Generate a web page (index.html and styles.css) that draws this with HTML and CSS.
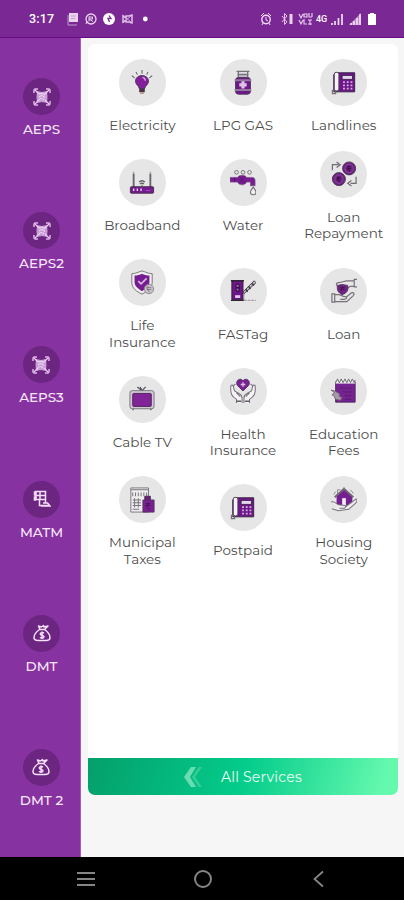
FILE: index.html
```html
<!DOCTYPE html>
<html lang="en">

<head>
    <meta charset="UTF-8">
    <meta name="viewport" content="width=device-width, initial-scale=1.0">
    <title>Services</title>
    <link rel="stylesheet" href="styles.css">
</head>

<body>
    <!-- Icons used more than once -->
    <svg class="defs" width="0" height="0">
        <symbol id="aeps" viewBox="0 0 18 18">
            <path d="M1 5V2l1-1h3M13 1h3l1 1v3M17 13v3l-1 1h-3M5 17H2l-1-1v-3" fill="none" stroke="#dfb5e8" stroke-width="1.5"/>
            <path d="M4 3l5 1 5-1 .5 6-.5 6-5-1-5 1-.5-6z" fill="#c79bd3"/>
            <path d="M6 6c2-1 5-1 6 1M6 9c2-2 4-2 6 1M6 12c1-2 3-2 5 0M2 2l4 4M16 2l-4 4M2 16l4-4M16 16l-4-4" fill="none" stroke="#ecd3f1" stroke-width="1.1"/>
        </symbol>
        <symbol id="bag" viewBox="0 0 18 18">
            <path d="M6.500 5.500C3 8 1 10.500 1 13.500 1 16 2.500 16.500 5 16.500h8c2.500 0 4-.5 4-3 0-3-2-5.500-5.500-8zM7 5.500L5.500 2l3 1 2-1.500.5 1.500L15 2l-3.500 3.500" fill="none" stroke="#f6e3fa" stroke-width="1.500" stroke-linejoin="round"/>
            <path d="M11 9.200C9.500 8 7.200 8.500 7.200 10c0 2 3.800 1 3.800 2.800 0 1.600-2.800 1.700-4 .5M9.100 7.500v7.500" fill="none" stroke="#f6e3fa" stroke-width="1.400"/>
        </symbol>
        <symbol id="phone" viewBox="0 0 28 28">
            <path d="M7 3h18.500v20.500H3V5h4" fill="#6d178b" stroke="#302038"/>
            <rect x="3.500" y="2.500" width="5" height="20" rx="2" fill="#f7f2f8" stroke="#493951"/>
            <rect x="12" y="6" width="11" height="4" fill="#e5d7eb" stroke="#321a3d" stroke-width=".8"/>
            <path d="M13 13h2M17 13h2M21 13h2M13 16.500h2M17 16.500h2M21 16.500h2M13 20h2M17 20h2M21 20h2" stroke="#d3b0dd" stroke-width="1.800"/>
            <path d="M5 23v2.500H1.500V22H4" fill="none" stroke="#77707b" stroke-width="1.300"/>
        </symbol>
    </svg>

    <header class="status-bar">
        <span class="time">3:17</span>
        <svg class="status-left" viewBox="0 0 82 14" width="82" height="14">
            <path d="M3 1h9v9H3z" fill="#e9d4ee"/>
            <path d="M2 3v10h9M5 4h5M5 6.500h4" stroke="#c49bd0" fill="none"/>
            <circle cx="25" cy="7" r="5" fill="none" stroke="#e9d4ee" stroke-width="1.300"/>
            <path d="M20 12l1-3M23 4.500v5M23 5h3.500v2H23l4 2.500" fill="none" stroke="#e9d4ee"/>
            <circle cx="43" cy="7" r="6" fill="#fff"/>
            <path d="M43 3.500l2 3h-3l1.500 3.500" fill="none" stroke="#7a2994" stroke-width="1.300"/>
            <path d="M57 4v6l3-2v2h3l3 1V3l-3 1h-3v2z" fill="none" stroke="#dfbee7" stroke-width="1.500"/>
            <path d="M57 3l9 8M57 11l9-8" stroke="#dfbee7" stroke-width=".8"/>
            <circle cx="79.300" cy="7" r="2.400" fill="#fff"/>
        </svg>
        <div class="status-right">
            <svg viewBox="0 0 54 14" width="54" height="14">
                <circle cx="6" cy="7.500" r="4.200" fill="none" stroke="#f0dcf4" stroke-width="1.400"/>
                <path d="M1 4l3-3M11 4L8 1M6 5v3l2 1M3 11l-1 2M9 11l1 2" stroke="#f0dcf4" fill="none"/>
                <path d="M22 4l5 6-2.500 2.500v-11L27 4l-5 6" stroke="#e3c6e9" fill="none"/>
                <path d="M31 2v10" stroke="#ead0ef" stroke-width="3"/>
                <path d="M39 2l2 4 2-4M44 2v3h3V2zM49 1v4h3M52 1v4M39 8l2 4 2-4M44 7v5h3M48 8h4M50 8v5M48 12h4" stroke="#e5c9eb" stroke-width="1.200" fill="none"/>
            </svg>
            <span class="network">4G</span>
            <svg viewBox="0 0 47 14" width="47" height="14">
                <path d="M2 11v2M5 9v4" stroke="#f0dcf4" stroke-width="1.700"/>
                <path d="M8.500 6v7M12 2v11" stroke="#f0dcf4" stroke-width="1.700"/>
                <path d="M19 13L31 1v12z" fill="#b987c8"/>
                <path d="M21 11v2M24 9v4M27 6v7M30 2v11" stroke="#f0dcf4" stroke-width="1.700"/>
                <path d="M40 1h4v1h2v11h-8V2h2z" fill="#fff"/>
            </svg>
        </div>
    </header>

    <div class="content">
        <nav class="sidebar">
            <a class="side-item"><span class="side-icon"><svg><use href="#aeps"/></svg></span>AEPS</a>
            <a class="side-item"><span class="side-icon"><svg><use href="#aeps"/></svg></span>AEPS2</a>
            <a class="side-item"><span class="side-icon"><svg><use href="#aeps"/></svg></span>AEPS3</a>
            <a class="side-item">
                <span class="side-icon"><svg viewBox="0 0 18 18">
                    <path d="M3 1.500h9.500v8H3zM7 1.500v8M3 5.500h9.500M3 2H1.500v3H3M3 7H1.500v3H3M6.500 9.500v6H15M12.500 9v4M10 13h4.500l2.500 3H8" fill="none" stroke="#f5e0f9" stroke-width="1.500"/>
                </svg></span>MATM
            </a>
            <a class="side-item"><span class="side-icon"><svg><use href="#bag"/></svg></span>DMT</a>
            <a class="side-item"><span class="side-icon"><svg><use href="#bag"/></svg></span>DMT 2</a>
        </nav>

        <main class="main">
            <section class="card">
                <div class="services">
                    <!-- First Row -->
                    <div class="service">
                        <span class="icon"><svg viewBox="0 0 28 28">
                            <path d="M3 6l3 2.500M7.500 2L9 5M14 0v4M20.500 2L19 5M25 6l-3 2.500" stroke="#5f5964" stroke-width="1.100"/>
                            <path d="M11 20c0-3-4-4-4-8 0-8 14-8 14 0 0 4-4 5-4 8z" fill="#812098" stroke="#52315e"/>
                            <path d="M14.500 8c2 .3 3 1.500 3 3.500" fill="none" stroke="#d9a8e4" stroke-width="1.500"/>
                            <path d="M11 20h6v4h-6z" fill="#4a304f"/>
                            <path d="M12 25h4" stroke="#aa6b42"/>
                        </svg></span>
                        <span class="label">Electricity</span>
                    </div>
                    <div class="service">
                        <span class="icon"><svg viewBox="0 0 28 28">
                            <path d="M10 3h8v6h-8z" fill="#c9c4ce"/>
                            <path d="M7 1.500h14M9 2v6M19 2v6M8 5h12" stroke="#77717a" stroke-width="1.500"/>
                            <rect x="6" y="8" width="16" height="18" rx="3" fill="#6f188c" stroke="#4b3453"/>
                            <path d="M5 11h18M5 21.500h18" stroke="#8f7b98" stroke-width="2"/>
                            <path d="M14 12v8M10 16h8" stroke="#dcc4e4" stroke-width="3.500"/>
                        </svg></span>
                        <span class="label">LPG GAS</span>
                    </div>
                    <div class="service">
                        <span class="icon"><svg><use href="#phone"/></svg></span>
                        <span class="label">Landlines</span>
                    </div>

                    <!-- Second Row -->
                    <div class="service">
                        <span class="icon"><svg viewBox="0 0 28 28">
                            <path d="M5 19V4M23 19V4" stroke="#69636d" stroke-width="2"/>
                            <path d="M5 4V2M23 4V2" stroke="#77727b"/>
                            <path d="M11 13c2-2 4-2 6 0M12 15c1-1 3-1 4 0M14 16v1" fill="none" stroke="#5d5762" stroke-width="1.500"/>
                            <rect x="1.500" y="18" width="25" height="7" rx="1" fill="#751b90" stroke="#423149"/>
                            <path d="M5 20v2.500M9 20v2.500M13 20v2.500" stroke="#ead7ef" stroke-width="1.500"/>
                            <path d="M18 22h5" stroke="#a84fbc"/>
                        </svg></span>
                        <span class="label">Broadband</span>
                    </div>
                    <div class="service">
                        <span class="icon"><svg viewBox="0 0 28 28">
                            <circle cx="7" cy="2.500" r="2" fill="none" stroke="#77717b"/>
                            <circle cx="14" cy="2.500" r="2" fill="none" stroke="#77717b"/>
                            <circle cx="21" cy="2.500" r="2" fill="none" stroke="#77717b"/>
                            <path d="M0 8h8c2-3 8-3 10 0h6c2 0 3 1 3 4v5h-5v-4h-4c-2 4-8 4-10 0H0z" fill="#791c92" stroke="#7c5587" stroke-width=".8"/>
                            <path d="M5 8v5M10 7l6 7M16 7l-6 7" stroke="#53176a"/>
                            <path d="M25 18.500c-2 3-3 3.500-3 5.500 0 3.500 6 3.500 6 0 0-2-1-2.500-3-5.500z" fill="#eee" stroke="#77727b" stroke-width="1.200"/>
                        </svg></span>
                        <span class="label">Water</span>
                    </div>
                    <div class="service">
                        <span class="icon"><svg viewBox="0 0 28 28">
                            <circle cx="19.500" cy="8" r="7" fill="#6d2182" stroke="#473850"/>
                            <circle cx="8.500" cy="19.500" r="7" fill="#6d2182" stroke="#473850"/>
                            <circle cx="19.500" cy="8" r="4.500" fill="none" stroke="#9b55aa" stroke-width=".7"/>
                            <circle cx="8.500" cy="19.500" r="4.500" fill="none" stroke="#9b55aa" stroke-width=".7"/>
                            <path d="M17.500 6h4M17.500 8h4M19.500 6l-2 2 3 3M6.500 17.500h4M6.500 19.500h4M8.500 17.500l-2 2 3 3" fill="none" stroke="#38133e" stroke-width="1.100"/>
                            <path d="M1.500 10V4H8M6 1l4 3-4 3M27 17v7h-6M22 21l-4 3 4 3" fill="none" stroke="#716b74" stroke-width="1.300"/>
                        </svg></span>
                        <span class="label">Loan<br>Repayment</span>
                    </div>

                    <!-- Third Row -->
                    <div class="service">
                        <span class="icon"><svg viewBox="0 0 28 28">
                            <path d="M3 4c4 0 7-2 11-3 4 1 7 3 11 3v9c0 7-5 10-11 13C8 23 3 20 3 13z" fill="#eee" stroke="#77707b"/>
                            <path d="M6 6c3 0 6-1 8-2 2 1 5 2 8 2v7c0 5-4 7-8 10-4-3-8-5-8-10z" fill="#751d90"/>
                            <path d="M10 12l3 3 6-6" fill="none" stroke="#d8b7e1" stroke-width="1.800"/>
                            <circle cx="21.500" cy="20.500" r="5" fill="#c9c3cc" stroke="#8a838d"/>
                            <path d="M19 19h5M19 21h5M21 17l-2 2 3 5" fill="none" stroke="#6f6872" stroke-width=".8"/>
                        </svg></span>
                        <span class="label">Life<br>Insurance</span>
                    </div>
                    <div class="service">
                        <span class="icon"><svg viewBox="0 0 28 28">
                            <path d="M2 3h12v20H2z" fill="#6e158a" stroke="#302235"/>
                            <path d="M1 3h14M1 24h14" stroke="#332338" stroke-width="1.500"/>
                            <rect x="6" y="6" width="4.500" height="9" rx="2" fill="#37134a"/>
                            <circle cx="8.200" cy="8.500" r="1.200" fill="#aa66bb"/>
                            <circle cx="8.200" cy="12.500" r="1.200" fill="#aa66bb"/>
                            <path d="M5.500 18.500h5.500v3H5.500z" fill="#e7c9eb"/>
                            <path d="M14 15L26 3l2 2-13 12z" fill="#bdb8be" stroke="#3f3944"/>
                            <path d="M17 12l2 3M20 9l2 3M23.500 6l2.500 2" stroke="#3f3944" stroke-width="1.600"/>
                            <path d="M15 17v7M15 24h13" stroke="#8e8990" stroke-dasharray="3 1"/>
                        </svg></span>
                        <span class="label">FASTag</span>
                    </div>
                    <div class="service">
                        <span class="icon"><svg viewBox="0 0 28 28">
                            <path d="M28 1.500h-3v8h3M25 3h-8c-3 0-4 2-9 2-3 0-3 4 1 4h6M25 9h-4c-2 0-2 3-5 2" fill="none" stroke="#77707a" stroke-width="1.300"/>
                            <path d="M7 8l5-1 6 1c1 6-1 8-6 10-4-2-6-5-5-10z" fill="#702286" stroke="#553262"/>
                            <path d="M10 10h5M10 12h5M12 10l-1 4" stroke="#3b1640"/>
                            <path d="M1 17h3v9H1zM4 18h4c3 0 4 2 7 2 3 0 2 3-1 3h-4M16 21l6-5c2-1 4 1 2 3l-7 6.500H4" fill="none" stroke="#77707a" stroke-width="1.300"/>
                        </svg></span>
                        <span class="label">Loan</span>
                    </div>

                    <!-- Fourth Row -->
                    <div class="service">
                        <span class="icon"><svg viewBox="0 0 28 28">
                            <path d="M9 1l5 4 4-4M12 1l2 4M5 24l-1 2M23 24l1 2" fill="none" stroke="#55505a" stroke-width="1.300"/>
                            <rect x="1" y="5" width="26" height="19.500" rx="2.500" fill="#cfc9d2" stroke="#77717a"/>
                            <rect x="4" y="8" width="20" height="14" rx="1" fill="#812498" stroke="#51225e"/>
                        </svg></span>
                        <span class="label">Cable TV</span>
                    </div>
                    <div class="service">
                        <span class="icon"><svg viewBox="0 0 28 28">
                            <path d="M14 14L8 8C5 3 11-1 14 3c3-4 9 0 6 5z" fill="#782192" stroke="#51315d"/>
                            <path d="M14 4.500v5M11.500 7h5" stroke="#d8bce2" stroke-width="1.500"/>
                            <path d="M7 27v-4C2 20 0 17 1 8c2-2 3 2 4 6l5 3c2 1 3 3 3 5v5M5 14C3 10 4 6 6 7M7 16l4 4M21 27v-4c5-3 7-6 6-15-2-2-3 2-4 6l-5 3c-2 1-3 3-3 5v5M23 14c2-4 1-8-1-7M21 16l-4 4" fill="#f5f3f5" stroke="#77707b" stroke-width="1.100"/>
                            <path d="M7 25h5M16 25h5" stroke="#625b66" stroke-width="1.500"/>
                        </svg></span>
                        <span class="label">Health<br>Insurance</span>
                    </div>
                    <div class="service">
                        <span class="icon"><svg viewBox="0 0 28 28">
                            <path d="M5 4h21v22H5z" fill="#772292" stroke="#4c2758"/>
                            <path d="M5 1h21v5H5z" fill="#eee"/>
                            <path d="M5 5l2-4 2 4 2-4 2 4 2-4 2 4 2-4 2 4 2-4 2 4 1-3" fill="none" stroke="#65606b"/>
                            <path d="M9 11h13M12 15h10M15 19h7M15 23h7" stroke="#552065"/>
                            <path d="M0 13l4 1 5 3v3l3 1-2 3-5-1-2-4-2-1 3-2z" fill="#a69ca9" stroke="#716775"/>
                        </svg></span>
                        <span class="label">Education<br>Fees</span>
                    </div>

                    <!-- Fifth Row -->
                    <div class="service">
                        <span class="icon"><svg viewBox="0 0 28 28">
                            <path d="M2 1h19v26H2z" fill="#eee" stroke="#77717a"/>
                            <path d="M2 3h19M4 6v4M7 6v4M10 6v4M13 6v4M16 6v4M19 6v4M4 14h9M4 17h9M4 20h9M4 24h7M6 12v10M10 12v10" stroke="#7b757f" stroke-width="1.100"/>
                            <path d="M17 10h6v5h-6z" fill="#672079" stroke="#4b2655"/>
                            <path d="M15 14h12v13H15z" fill="#782092" stroke="#54325f"/>
                            <path d="M18 18h5M18 20h5M21 17l-2 4 3 4" fill="none" stroke="#421451"/>
                        </svg></span>
                        <span class="label">Municipal<br>Taxes</span>
                    </div>
                    <div class="service">
                        <span class="icon"><svg><use href="#phone"/></svg></span>
                        <span class="label">Postpaid</span>
                    </div>
                    <div class="service">
                        <span class="icon"><svg viewBox="0 0 28 28">
                            <path d="M6 10l8-7 9 7v10H6z" fill="#742090"/>
                            <path d="M4 11l10-9 10 9" fill="none" stroke="#716377" stroke-width="2"/>
                            <path d="M7 7V3h3M14 0v2M5 5L3 8M21 3l3 4" stroke="#8b848e" fill="none"/>
                            <path d="M12 12h4v8h-4z" fill="#f3edf5"/>
                            <path d="M0 16c4-1 5 2 8 3l7 1c2 1 0 3-2 3H9M16 21l7-5 4-3c2 0 1 3-1 5l-7 6-11 1.500-7-2" fill="#f0eef1" stroke="#77717a" stroke-width="1.100"/>
                        </svg></span>
                        <span class="label">Housing<br>Society</span>
                    </div>
                </div>

                <button class="all-services">
                    <svg viewBox="0 0 20 22" width="20" height="22">
                        <path d="M8 1h5L7 11l6 10H8L1 11z" fill="#69dcb1"/>
                        <path d="M16 1h3l-7 10 7 10h-3L9 11z" fill="#38cd98"/>
                    </svg>
                    All Services
                </button>
            </section>
        </main>
    </div>

    <footer class="nav-bar">
        <svg viewBox="0 0 20 20" width="20" height="20"><path d="M1 4h18M1 10h18M1 16h18" stroke="#858585" stroke-width="2"/></svg>
        <svg viewBox="0 0 20 20" width="20" height="20"><circle cx="10" cy="10" r="8" fill="none" stroke="#858585" stroke-width="2"/></svg>
        <svg viewBox="0 0 20 20" width="20" height="20"><path d="M14 2.500L5.500 10l8.500 7.500" fill="none" stroke="#858585" stroke-width="1.800"/></svg>
    </footer>
</body>

</html>
```

FILE: styles.css
```css
* {
    box-sizing: border-box;
}

body {
    margin: 0;
    height: 900px;
    display: flex;
    flex-direction: column;
    overflow: hidden;
    font-family: Montserrat, Inter, sans-serif;
    background: #f5f5f5;
}

svg {
    display: block;
    flex-shrink: 0;
}

.defs {
    position: absolute;
}

.status-bar {
    height: 38px;
    flex-shrink: 0;
    display: flex;
    align-items: center;
    padding: 0 27px 0 29px;
    background: #7a2994;
    border-bottom: 1px solid #650b83;
    color: #fff;
}

.time {
    width: 37px;
    font-family: Roboto, sans-serif;
    font-size: 12.5px;
    font-weight: 500;
    letter-spacing: 0.2px;
}

.status-right {
    margin-left: auto;
    display: flex;
    align-items: center;
    gap: 2px;
}

.network {
    width: 12px;
    font-family: Roboto, sans-serif;
    font-size: 9px;
    font-weight: 500;
}

.content {
    display: flex;
    height: 819px;
}

.sidebar {
    width: 81px;
    display: flex;
    flex-direction: column;
    align-items: center;
    gap: 75.2px;
    padding: 40px 0 0 2px;
    background: #8632a0;
    box-shadow: inset -1px 0 #a25bba;
}

.side-item {
    display: flex;
    flex-direction: column;
    align-items: center;
    gap: 6px;
    color: #f8e8fb;
    font-size: 13.5px;
    font-weight: 500;
    line-height: 16px;
}

.side-icon {
    width: 37px;
    height: 37px;
    display: flex;
    align-items: center;
    justify-content: center;
    border-radius: 50%;
    background: #6c2580;
}

.side-icon svg {
    width: 18px;
    height: 18px;
}

.main {
    flex: 1;
    padding: 6px 6px 0 7px;
    background: #f6f6f6;
}

.card {
    height: 751px;
    display: flex;
    flex-direction: column;
    justify-content: space-between;
    border-radius: 7px;
    background: #fff;
    overflow: hidden;
}

.services {
    display: grid;
    grid-template-columns: repeat(3, 100.7px);
    row-gap: 17.4px;
    padding: 15px 0 0 4px;
    align-items: center;
}

.service {
    display: flex;
    flex-direction: column;
    align-items: center;
    gap: 11px;
}

.icon {
    width: 47px;
    height: 47px;
    display: flex;
    align-items: center;
    justify-content: center;
    border-radius: 50%;
    background: #e6e6e6;
}

.icon svg {
    width: 26px;
    height: 26px;
}

.label {
    font-size: 13.5px;
    line-height: 16.5px;
    text-align: center;
    color: #4c4c4c;
}

.all-services {
    height: 37px;
    display: flex;
    align-items: center;
    gap: 18px;
    padding: 0 0 0 95px;
    border: none;
    background: linear-gradient(105deg, #049f6b, #04cc8b 50%, #65f9ae 95%);
    color: #e9fff4;
    font-family: inherit;
    font-size: 14px;
    letter-spacing: 0.2px;
}

.nav-bar {
    flex: 1;
    display: flex;
    align-items: center;
    gap: 96.5px;
    padding-left: 76px;
    background: #000;
}
```
